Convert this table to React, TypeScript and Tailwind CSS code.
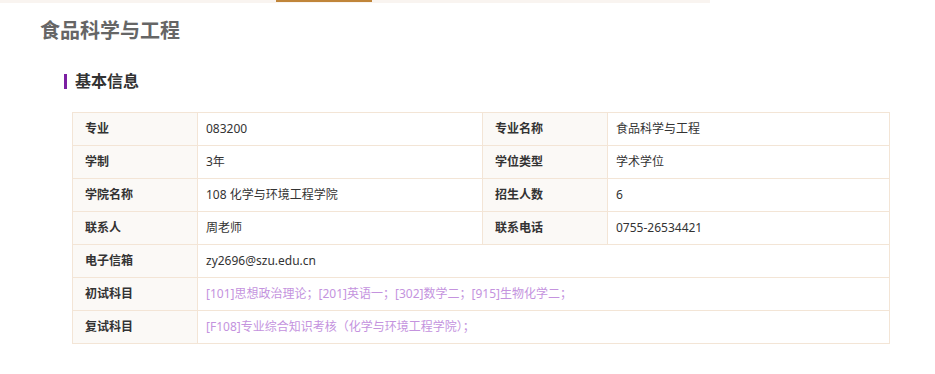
const ROWS: [string, string, string?, string?][] = [
  ["专业", "083200", "专业名称", "食品科学与工程"],
  ["学制", "3年", "学位类型", "学术学位"],
  ["学院名称", "108 化学与环境工程学院", "招生人数", "6"],
  ["联系人", "周老师", "联系电话", "0755-26534421"],
];

const WIDE: { label: string; value: string; link?: boolean }[] = [
  { label: "电子信箱", value: "zy2696@szu.edu.cn" },
  {
    label: "初试科目",
    value: "[101]思想政治理论；[201]英语一；[302]数学二；[915]生物化学二；",
    link: true,
  },
  {
    label: "复试科目",
    value: "[F108]专业综合知识考核（化学与环境工程学院）；",
    link: true,
  },
];

const labelCls =
  "h-[33px] border border-[#f3e5d6] bg-[#fbf9f6] pl-3 pr-2 text-left font-bold text-[#333]";
const valueCls = "h-[33px] border border-[#f3e5d6] pl-2 pr-2 text-left text-[#333]";

export default function App() {
  return (
    <div
      className="min-h-[374px] bg-white"
      style={{ fontFamily: '"Noto Sans", "Noto Sans CJK SC", sans-serif' }}
    >
      <div className="flex h-[3px] w-[710px] bg-[#f9f4f0]">
        <div className="ml-[276px] h-[2px] w-[96px] bg-[#c0853a]" />
      </div>

      <h1 className="ml-10 mt-[14px] text-[20px] font-bold leading-[28px] text-[#666]">
        食品科学与工程
      </h1>

      <div className="ml-16 mt-[25px] flex items-center">
        <span className="h-[15px] w-[3px] bg-[#7b1fa2]" />
        <h2 className="ml-[8px] text-[16px] font-bold leading-[22px] text-[#333]">
          基本信息
        </h2>
      </div>

      <table className="ml-[72px] mt-[20px] w-[818px] table-fixed border-collapse text-[12px]">
        <colgroup>
          <col className="w-[125px]" />
          <col className="w-[285px]" />
          <col className="w-[125px]" />
          <col />
        </colgroup>
        <tbody>
          {ROWS.map(([l1, v1, l2, v2]) => (
            <tr key={l1}>
              <td className={labelCls}>{l1}</td>
              <td className={valueCls}>{v1}</td>
              <td className={labelCls}>{l2}</td>
              <td className={valueCls}>{v2}</td>
            </tr>
          ))}
          {WIDE.map((r) => (
            <tr key={r.label}>
              <td className={labelCls}>{r.label}</td>
              <td
                colSpan={3}
                className={
                  r.link
                    ? "h-[33px] border border-[#f3e5d6] pl-2 text-left text-[#c493de]"
                    : valueCls
                }
              >
                {r.value}
              </td>
            </tr>
          ))}
        </tbody>
      </table>
    </div>
  );
}
